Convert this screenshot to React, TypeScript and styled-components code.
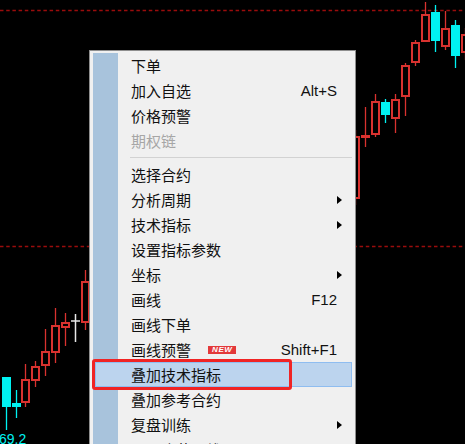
import React from 'react'
import styled, { createGlobalStyle } from 'styled-components'

const GlobalStyle = createGlobalStyle`
  html, body {
    margin: 0;
    padding: 0;
    background: #000;
    overflow: hidden;
  }
`

type Candle = { x: number; top: number; bot: number; hi: number; lo: number; kind: 'red' | 'cyan' | 'doji' }

const candles: Candle[] = [
  { x: 2, top: 377, bot: 407, hi: 377, lo: 430, kind: 'cyan' },
  { x: 12, top: 403, bot: 407, hi: 390, lo: 418, kind: 'cyan' },
  { x: 21, top: 379, bot: 403, hi: 364, lo: 407, kind: 'red' },
  { x: 31, top: 366, bot: 381, hi: 361, lo: 387, kind: 'red' },
  { x: 41, top: 351, bot: 366, hi: 329, lo: 376, kind: 'red' },
  { x: 51, top: 325, bot: 353, hi: 308, lo: 363, kind: 'red' },
  { x: 61, top: 322, bot: 328, hi: 313, lo: 346, kind: 'red' },
  { x: 71, top: 321, bot: 321, hi: 314, lo: 342, kind: 'doji' },
  { x: 81, top: 281, bot: 323, hi: 270, lo: 330, kind: 'red' },
  { x: 351, top: 136, bot: 199, hi: 130, lo: 205, kind: 'red' },
  { x: 361, top: 135, bot: 138, hi: 107, lo: 147, kind: 'red' },
  { x: 371, top: 101, bot: 135, hi: 94, lo: 137, kind: 'red' },
  { x: 381, top: 102, bot: 115, hi: 99, lo: 123, kind: 'cyan' },
  { x: 391, top: 99, bot: 119, hi: 94, lo: 133, kind: 'red' },
  { x: 401, top: 65, bot: 97, hi: 63, lo: 116, kind: 'red' },
  { x: 411, top: 42, bot: 63, hi: 40, lo: 66, kind: 'red' },
  { x: 421, top: 14, bot: 42, hi: 2, lo: 42, kind: 'red' },
  { x: 431, top: 12, bot: 41, hi: 5, lo: 52, kind: 'cyan' },
  { x: 441, top: 28, bot: 47, hi: 11, lo: 50, kind: 'red' },
  { x: 451, top: 25, bot: 56, hi: 20, lo: 68, kind: 'cyan' },
  { x: 461, top: 34, bot: 53, hi: 28, lo: 60, kind: 'red' },
]

const RED = '#d9322f'
const CYAN = '#00f2f2'

type Item = { label?: string; shortcut?: string; sub?: boolean; disabled?: boolean; isNew?: boolean; active?: boolean; sep?: boolean }

const items: Item[] = [
  { label: '下单' },
  { label: '加入自选', shortcut: 'Alt+S' },
  { label: '价格预警' },
  { label: '期权链', disabled: true },
  { sep: true },
  { label: '选择合约' },
  { label: '分析周期', sub: true },
  { label: '技术指标', sub: true },
  { label: '设置指标参数' },
  { label: '坐标', sub: true },
  { label: '画线', shortcut: 'F12' },
  { label: '画线下单' },
  { label: '画线预警', shortcut: 'Shift+F1', isNew: true },
  { label: '叠加技术指标', active: true },
  { label: '叠加参考合约' },
  { label: '复盘训练', sub: true },
  { label: '显示隐藏画线', sub: true },
]

const Screen = styled.div`
  position: relative;
  width: 465px;
  height: 444px;
  background: #000;
  overflow: hidden;
`

const Chart = styled.svg`
  display: block;
`

const Menu = styled.div`
  position: absolute;
  left: 89px;
  top: 50px;
  width: 267px;
  box-sizing: border-box;
  border: 1px solid #8e8e8e;
  background: #f0f0f0;
  padding: 2px 0 2px 3px;
  font-family: "Liberation Sans", "Noto Sans CJK SC", sans-serif;
  font-size: 15px;
  color: #111;
`

const List = styled.div`
  display: flex;
  flex-direction: column;
  background: linear-gradient(90deg, #a8c3dc 0 25px, transparent 25px);
`

const Row = styled.div<{ $active?: boolean; $disabled?: boolean }>`
  position: relative;
  display: flex;
  align-items: center;
  height: 25px;
  box-sizing: border-box;
  margin: 0 3px 0 2px;
  padding-left: 35px;
  border: 1px solid ${p => (p.$active ? '#8fbdf0' : 'transparent')};
  background: ${p => (p.$active ? '#bcd4ee' : 'transparent')};
  color: ${p => (p.$disabled ? '#a6a6a6' : '#111')};
  white-space: nowrap;
`

const Label = styled.span`
  flex: 1;
  display: flex;
  align-items: center;
`

const Shortcut = styled.span`
  font-family: "Liberation Sans", sans-serif;
  font-size: 15px;
`

const ArrowSlot = styled.span`
  width: 14px;
  display: flex;
  align-items: center;
`

const Arrow = styled.span`
  width: 0;
  height: 0;
  border-top: 4px solid transparent;
  border-bottom: 4px solid transparent;
  border-left: 5px solid #000;
`

const NewBadge = styled.span`
  margin-left: 17px;
  background: #e3393a;
  color: #fff;
  font-family: "Liberation Sans", sans-serif;
  font-weight: bold;
  font-style: italic;
  font-size: 8px;
  line-height: 8px;
  letter-spacing: 0.6px;
  padding: 0 4px;
`

const Separator = styled.div`
  height: 9px;
  display: flex;
  align-items: center;
  padding-left: 37px;
  margin-right: 3px;

  &::after {
    content: '';
    flex: 1;
    height: 1px;
    background: #d2d2d2;
  }
`

const Callout = styled.div`
  position: absolute;
  left: -4px;
  top: -4px;
  width: 200px;
  height: 31px;
  box-sizing: border-box;
  border: 3px solid #f02424;
  border-radius: 3px;
  pointer-events: none;
`

function CandleMark({ c }: { c: Candle }) {
  const cx = c.x + 4.5
  if (c.kind === 'doji') {
    return (
      <g stroke="#e8e8e8" strokeWidth={1.5}>
        <line x1={cx} x2={cx} y1={c.hi} y2={c.lo} />
        <line x1={c.x} x2={c.x + 9} y1={c.top} y2={c.top} />
      </g>
    )
  }
  const color = c.kind === 'red' ? RED : CYAN
  return (
    <g>
      <line x1={cx} x2={cx} y1={c.hi} y2={c.lo} stroke={color} strokeWidth={1.3} />
      {c.kind === 'red' ? (
        <rect x={c.x + 1} y={c.top + 1} width={7} height={Math.max(c.bot - c.top - 2, 1)} fill="#000" stroke={color} strokeWidth={2} />
      ) : (
        <rect x={c.x} y={c.top} width={9} height={c.bot - c.top} fill={color} />
      )}
    </g>
  )
}

export default function App() {
  return (
    <>
      <GlobalStyle />
      <Screen>
        <Chart width={465} height={444} viewBox="0 0 465 444">
          <line x1={0} x2={465} y1={10.5} y2={10.5} stroke="#9a0c0c" strokeWidth={1.6} strokeDasharray="3.5 2.7" />
          <line x1={0} x2={465} y1={246.5} y2={246.5} stroke="#9a0c0c" strokeWidth={1.6} strokeDasharray="3.5 2.7" />
          {candles.map((c, i) => (
            <CandleMark key={i} c={c} />
          ))}
          <text x={-1} y={444} fill={CYAN} fontSize={14} fontFamily="Liberation Sans, sans-serif">69.2</text>
        </Chart>
        <Menu>
          <List>
            {items.map((it, i) =>
              it.sep ? (
                <Separator key={i} />
              ) : (
                <Row key={i} $active={it.active} $disabled={it.disabled}>
                  {it.active && <Callout />}
                  <Label>
                    {it.label}
                    {it.isNew && <NewBadge>NEW</NewBadge>}
                  </Label>
                  {it.shortcut && <Shortcut>{it.shortcut}</Shortcut>}
                  <ArrowSlot>{it.sub && <Arrow />}</ArrowSlot>
                </Row>
              )
            )}
          </List>
        </Menu>
      </Screen>
    </>
  )
}
